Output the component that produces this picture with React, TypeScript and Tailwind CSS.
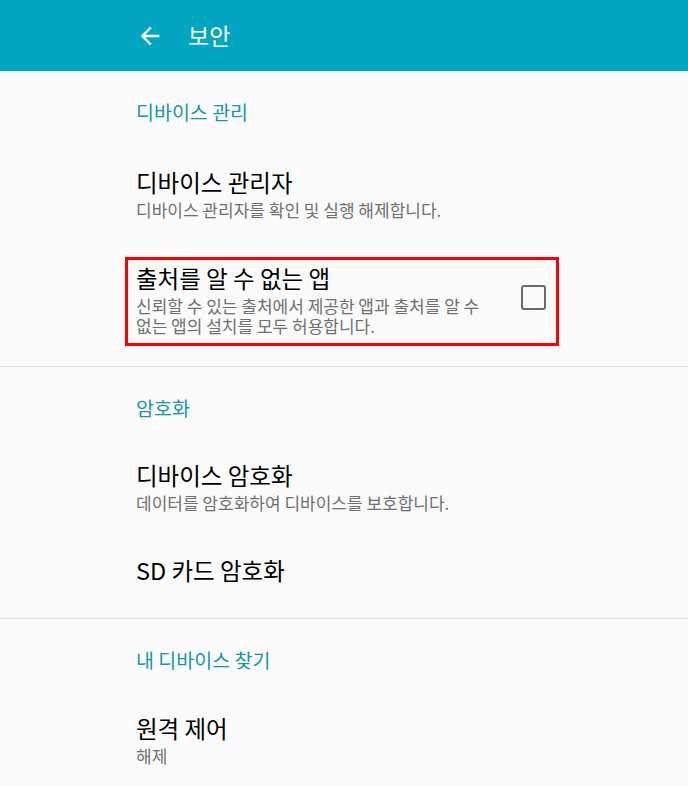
import type { ReactNode } from 'react';

const font = { fontFamily: '"Noto Sans CJK KR", "Noto Sans", sans-serif' };

function SectionHeader({ children }: { children: ReactNode }) {
  return (
    <div className="pl-[136px] pt-[27px] pb-[17px] text-[19.5px] leading-[28px] text-[#1596a9]">
      {children}
    </div>
  );
}

function Item({
  title,
  subtitle,
  className = 'py-[20px]',
}: {
  title: string;
  subtitle?: ReactNode;
  className?: string;
}) {
  return (
    <div className={`flex items-center pl-[136px] pr-[140px] ${className}`}>
      <div className="flex-1">
        <div className="text-[23.5px] leading-[36px] text-black">{title}</div>
        {subtitle && <div className="text-[17px] leading-[20px] text-[#707070]">{subtitle}</div>}
      </div>
    </div>
  );
}

function Checkbox() {
  return <div className="w-[25px] h-[25px] rounded-[3px] border-2 border-[#6a6a6a] shrink-0" />;
}

export default function App() {
  return (
    <div className="w-[688px] h-[786px] overflow-hidden bg-[#fafafa]" style={font}>
      <header className="h-[71px] bg-[#02a6c1] flex items-center pl-[136px] text-white">
        <svg width="28" height="28" viewBox="0 0 24 24" fill="white">
          <path d="M20 11H7.83l5.59-5.59L12 4l-8 8 8 8 1.41-1.41L7.83 13H20v-2z" />
        </svg>
        <span className="ml-[24px] -mt-[2px] text-[23px] leading-[30px]">보안</span>
      </header>

      <section className="pb-[11px] border-b border-[#e2e2e2]">
        <SectionHeader>디바이스 관리</SectionHeader>
        <Item title="디바이스 관리자" subtitle="디바이스 관리자를 확인 및 실행 해제합니다." className="pt-[21px] pb-[20px]" />
        <div className="relative">
          <Item
            title="출처를 알 수 없는 앱"
            className="pt-[20px] pb-[19px]"
            subtitle={
              <>
                신뢰할 수 있는 출처에서 제공한 앱과 출처를 알 수
                <br />
                없는 앱의 설치를 모두 허용합니다.
              </>
            }
          />
          <div className="absolute left-[125px] top-[17px] w-[434px] h-[89px] border-[3px] border-[#ff0000] pointer-events-none" />
          <div className="absolute left-[521px] top-[45px]">
            <Checkbox />
          </div>
        </div>
      </section>

      <section className="pb-[12px] border-b border-[#e2e2e2]">
        <SectionHeader>암호화</SectionHeader>
        <Item title="디바이스 암호화" subtitle="데이터를 암호화하여 디바이스를 보호합니다." className="pt-[18px] pb-[20px]" />
        <Item title="SD 카드 암호화" className="pt-[19px] pb-[18px]" />
      </section>

      <section>
        <SectionHeader>내 디바이스 찾기</SectionHeader>
        <Item title="원격 제어" subtitle="해제" className="pt-[19px] pb-[20px]" />
      </section>
    </div>
  );
}
